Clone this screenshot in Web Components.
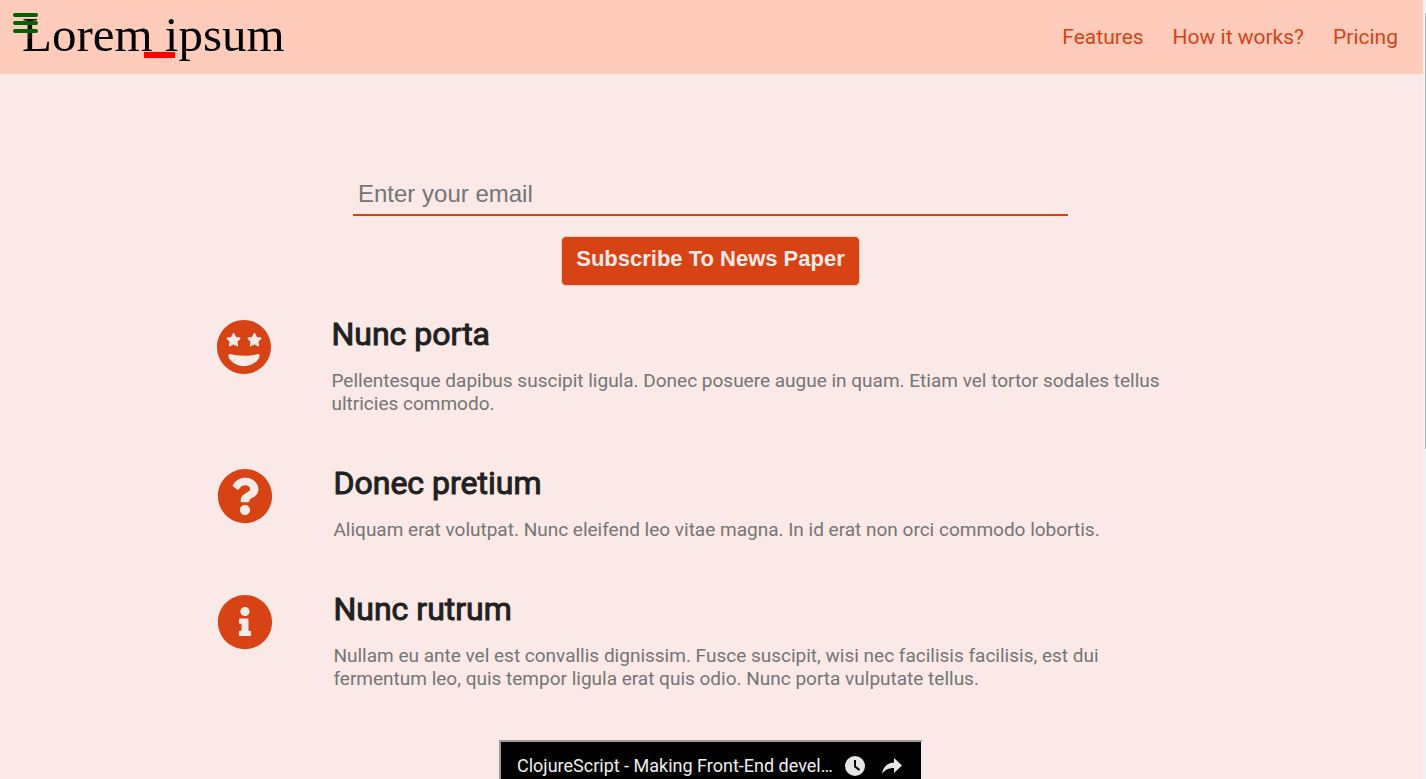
<!DOCTYPE html>
<html lang="en">
<head>
<meta charset="utf-8">
<title>Lorem ipsum</title>
<style>
  html, body { margin: 0; height: 100%; }
  body { font-family: Roboto, "Liberation Sans", sans-serif; background: #fae9e6; overflow: hidden; }
</style>
</head>
<body>
<landing-page></landing-page>
<script>
const define = (name, html) => {
  const template = document.createElement('template');
  template.innerHTML = html;
  customElements.define(name, class extends HTMLElement {
    constructor() {
      super();
      this.attachShadow({ mode: 'open' }).append(template.content.cloneNode(true));
    }
  });
};

define('site-logo', `
<style>
  :host { display: block; position: relative; }
  a { display: block; padding-bottom: 4px; font: 49px/54px "Liberation Serif", serif; color: #000; text-decoration: none; white-space: nowrap; }
  .bar { position: absolute; left: 122px; top: 44px; width: 31px; height: 6px; background: #f00; }
</style>
<a href="#">Lorem ipsum</a><span class="bar"></span>`);

define('menu-button', `
<style>
  :host { display: block; }
  button { display: block; border: 0; padding: 6px 7px; margin: 0; background: rgba(255, 204, 188, .1); }
  svg { display: block; }
</style>
<button type="button" aria-label="Open menu"><svg width="25" height="20" viewBox="0 0 25 20"><g fill="#006400"><rect width="25" height="4" rx="2"/><rect y="8" width="25" height="4" rx="2"/><rect y="16" width="25" height="4" rx="2"/></g></svg></button>`);

define('nav-link', `
<style>
  :host { display: block; }
  a { color: #d84315; text-decoration: none; font-size: 21px; line-height: 24px; white-space: nowrap; }
</style>
<a href="#"><slot></slot></a>`);

define('site-header', `
<style>
  :host { display: block; position: relative; background: #ffccbc; }
  header { display: flex; align-items: center; justify-content: space-between; min-height: 74px; box-sizing: border-box; padding: 0 25px 0 22px; }
  nav { display: flex; gap: 29px; }
  menu-button { position: absolute; left: 6px; top: 7px; }
</style>
<header>
  <site-logo></site-logo>
  <nav><nav-link>Features</nav-link><nav-link>How it works?</nav-link><nav-link>Pricing</nav-link></nav>
</header>
<menu-button></menu-button>`);

define('subscribe-form', `
<style>
  :host { display: block; }
  form { display: flex; flex-direction: column; align-items: center; gap: 20px; }
  input { box-sizing: border-box; width: 100%; height: 43px; border: 0; border-bottom: 2px solid #d84315; border-radius: 0; padding: 0 5px; margin: 0; background: none; outline: 0; font: 24px "Liberation Sans", sans-serif; color: #212121; }
  input::placeholder { color: #757575; opacity: 1; }
  button { border: 1px solid #ffccbc; border-radius: 5px; margin: 0; padding: 9px 14px 13px; background: #d84315; color: #fae9e6; font: bold 22px/26px "Liberation Sans", sans-serif; white-space: nowrap; }
</style>
<form>
  <input type="email" placeholder="Enter your email" aria-label="Enter your email">
  <button type="button">Subscribe To News Paper</button>
</form>`);

define('feature-item', `
<style>
  :host { display: flex; align-items: flex-start; gap: 60px; }
  ::slotted(svg) { flex: none; display: block; height: 56px; margin-top: 3px; fill: #d84315; }
  .copy { flex: 1; min-width: 0; }
  h2 { margin: 0 0 16px; font-size: 32px; line-height: 37px; font-weight: 400; color: #212121; -webkit-text-stroke: 1px #212121; }
  p { margin: 0; font-size: 19px; line-height: 23px; color: #757575; }
</style>
<slot name="icon"></slot>
<div class="copy"><h2><slot name="title"></slot></h2><p><slot></slot></p></div>`);

define('video-card', `
<style>
  :host { display: block; box-sizing: border-box; border: 2px solid; border-color: #9a9a9a #eee #eee #9a9a9a; background: #000; height: 240px; }
  .bar { display: flex; align-items: center; padding: 12px 18px 0 16px; }
  a { flex: 1; min-width: 0; color: #eee; text-decoration: none; font-size: 18px; line-height: 24px; white-space: nowrap; }
  button { border: 0; margin: 0; padding: 0; background: none; display: block; }
  .later { margin: 0 15px 0 10px; }
  svg { display: block; fill: #e6e6e6; }
</style>
<div class="bar">
  <a href="#">ClojureScript - Making Front-End devel…</a>
  <button type="button" class="later" aria-label="Watch later"><svg width="22" height="22" viewBox="0 0 22 22"><path fill-rule="evenodd" d="M11 1a10 10 0 1 0 0 20a10 10 0 1 0 0-20zM10 5h2v6l4 3-1 2-5-4z"/></svg></button>
  <button type="button" aria-label="Share"><svg width="22" height="20" viewBox="0 0 22 20"><path d="M13 2l8 7.500-8 7.500v-5C7 12 4 14 1 18C2 11 6 7 13 6.500z"/></svg></button>
</div>`);

define('scroll-rail', `
<style>
  :host { display: grid; grid-template-columns: 1fr 1px; background: #f0f0f0; }
  span { grid-column: 2; height: 56%; margin-top: 13px; background: #b8b8b8; }
</style>
<span></span>`);

define('landing-page', `
<style>
  :host { display: grid; grid-template-columns: 1fr 3px; height: 100vh; overflow: hidden; }
  .page { min-width: 0; min-height: 0; overflow: hidden; }
  main { display: flex; flex-direction: column; align-items: center; padding-top: 99px; }
  subscribe-form { width: 715px; max-width: 90%; margin-right: 2px; }
  .features { box-sizing: border-box; width: 70%; padding: 0 20px 0 4px; margin: 30px 0 50px; display: flex; flex-direction: column; gap: 50px; }
  video-card { width: 424px; max-width: 100%; margin-right: 1px; }
</style>
<div class="page">
  <site-header></site-header>
  <main>
    <subscribe-form></subscribe-form>
    <section class="features">
      <feature-item>
        <svg slot="icon" width="54" height="56" viewBox="0 0 496 512"><path d="M248 8C111 8 0 119 0 256s111 248 248 248 248-111 248-248S385 8 248 8zM94.6 168.900l34.900-5 15.500-31.600c2.900-5.800 11-5.700 13.900 0l15.500 31.600 34.900 5c6.200 1 8.900 8.600 4.300 13.200l-25.400 24.600 6 34.900c1 6.200-5.300 11-11 7.900L152 233.300l-31.300 16.300c-5.700 3.100-12-1.700-11-7.900l6-34.900-25.400-24.600c-4.600-4.600-1.900-12.200 4.300-13.200zM248 432c-60.600 0-134.500-38.300-143.800-93.300-2-11.800 9.300-21.500 20.700-17.900C155.100 330.500 200 336 248 336s92.900-5.500 123.100-15.200c11.500-3.700 22.600 6.200 20.700 17.900-9.300 55-83.200 93.300-143.800 93.300zm157.700-249.900l-25.400 24.600 6 34.900c1 6.200-5.300 11-11 7.900L344 233.300l-31.300 16.300c-5.700 3.100-12-1.700-11-7.900l6-34.900-25.400-24.600c-4.500-4.600-1.900-12.200 4.300-13.200l34.900-5 15.500-31.600c2.900-5.800 11-5.700 13.900 0l15.500 31.600 34.900 5c6.300.9 9 8.500 4.400 13.100z"/></svg>
        <span slot="title">Nunc porta</span>Pellentesque dapibus suscipit ligula. Donec posuere augue in quam. Etiam vel tortor sodales tellus ultricies commodo.
      </feature-item>
      <feature-item>
        <svg slot="icon" width="56" height="56" viewBox="0 0 512 512"><path d="M504 256c0 136.997-111.043 248-248 248S8 392.997 8 256C8 119.083 119.043 8 256 8s248 111.083 248 248zM262.655 90c-54.497 0-89.255 22.957-116.549 63.758-3.536 5.286-2.353 12.415 2.715 16.258l34.699 26.310c5.205 3.947 12.621 3.008 16.665-2.122 17.864-22.658 30.113-35.797 57.303-35.797 20.429 0 45.698 13.148 45.698 32.958 0 14.976-12.363 22.667-32.534 33.976C247.128 238.528 216 254.941 216 296v4c0 6.627 5.373 12 12 12h56c6.627 0 12-5.373 12-12v-1.333c0-28.462 83.186-29.647 83.186-106.667 0-58.002-60.165-102-116.531-102zM256 338c-25.365 0-46 20.635-46 46 0 25.364 20.635 46 46 46s46-20.636 46-46c0-25.365-20.635-46-46-46z"/></svg>
        <span slot="title">Donec pretium</span>Aliquam erat volutpat. Nunc eleifend leo vitae magna. In id erat non orci commodo lobortis.
      </feature-item>
      <feature-item>
        <svg slot="icon" width="56" height="56" viewBox="0 0 512 512"><path d="M256 8C119.043 8 8 119.083 8 256c0 136.997 111.043 248 248 248s248-111.003 248-248C504 119.083 392.957 8 256 8zm0 110c23.196 0 42 18.804 42 42s-18.804 42-42 42-42-18.804-42-42 18.804-42 42-42zm56 254c0 6.627-5.373 12-12 12h-88c-6.627 0-12-5.373-12-12v-24c0-6.627 5.373-12 12-12h12v-64h-12c-6.627 0-12-5.373-12-12v-24c0-6.627 5.373-12 12-12h64c6.627 0 12 5.373 12 12v100h12c6.627 0 12 5.373 12 12v24z"/></svg>
        <span slot="title">Nunc rutrum</span>Nullam eu ante vel est convallis dignissim. Fusce suscipit, wisi nec facilisis facilisis, est dui fermentum leo, quis tempor ligula erat quis odio. Nunc porta vulputate tellus.
      </feature-item>
    </section>
    <video-card></video-card>
  </main>
</div>
<scroll-rail></scroll-rail>`);
</script>
</body>
</html>
